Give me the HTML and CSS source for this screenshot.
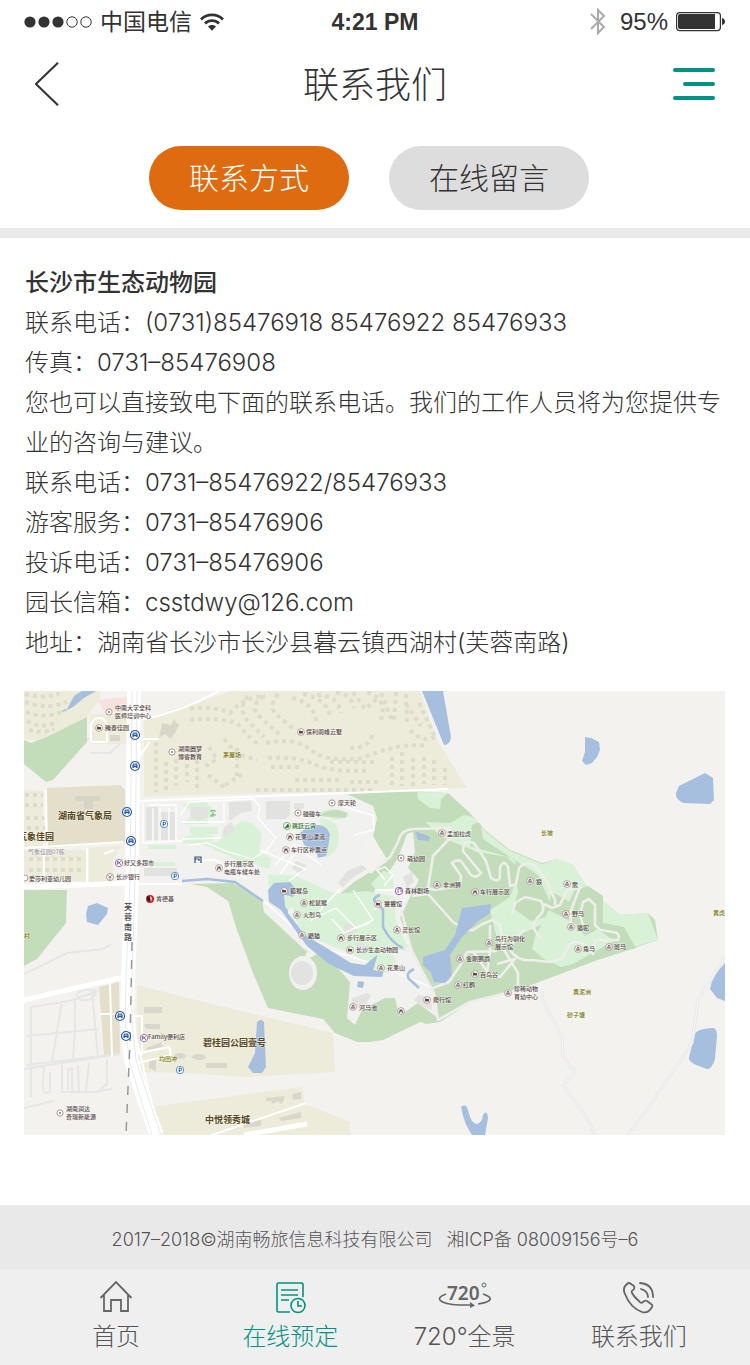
FILE: index.html
```html
<!DOCTYPE html>
<html lang="zh-CN">
<head>
<meta charset="utf-8">
<meta name="viewport" content="width=device-width, initial-scale=1">
<title>联系我们</title>
<link rel="stylesheet" href="styles.css">
</head>
<body>
<div class="status">
  <div class="status-left">
    <svg class="signal" viewBox="0 0 68 12" width="68" height="12" aria-hidden="true"><g fill="#333"><circle cx="6" cy="6" r="5.6"/><circle cx="20" cy="6" r="5.6"/><circle cx="34" cy="6" r="5.6"/></g><g fill="none" stroke="#333"><circle cx="48" cy="6" r="5.2"/><circle cx="62" cy="6" r="5.2"/></g></svg>
    <span class="carrier">中国电信</span>
    <svg viewBox="0 0 24 18" width="24" height="18" aria-hidden="true"><g fill="none" stroke="#333" stroke-width="2.8"><path d="M1 6.4C7 .3 17 .3 23 6.4"/><path d="M5 10.4c4-3.8 10-3.8 14 0"/></g><path d="M8 13.6c2.400-2 5.600-2 8 0l-4 4.200z" fill="#333"/></svg>
  </div>
  <span class="clock">4:21 PM</span>
  <div class="status-right">
    <svg class="bluetooth" viewBox="0 0 16 28" width="16" height="28" aria-hidden="true"><path d="M1 6l13 13-6 6V2l6 6L1 21" fill="none" stroke="#aaa" stroke-width="2"/></svg>
    <span class="percent">95%</span>
    <svg viewBox="0 0 50 20" width="50" height="20" aria-hidden="true"><rect x=".6" y=".6" width="43.800" height="18" rx="3" fill="none" stroke="#333" stroke-width="1.200"/><path d="M4 2h35v15H4q-2 0-2-2V4q0-2 2-2z" fill="#333"/><path d="M46 6q3 1 3 3.500T46 13z" fill="#333"/></svg>
  </div>
</div>

<header class="header">
  <button class="icon-button" type="button" aria-label="返回"><svg viewBox="0 0 24 44" width="24" height="44"><path d="M23 .7L1 22l22 21.300" fill="none" stroke="#333" stroke-width="2"/></svg></button>
  <h1 class="title">联系我们</h1>
  <button class="icon-button menu-button" type="button" aria-label="菜单"><svg viewBox="0 0 42 32" width="42" height="32"><path d="M2 2h38M12 16h28M2 30h38" stroke="#009383" stroke-width="4" stroke-linecap="round"/></svg></button>
</header>

<div class="tabs">
  <button class="tab tab-active" type="button">联系方式</button>
  <button class="tab" type="button">在线留言</button>
</div>

<main class="content">
  <div class="details">
    <h2 class="name">长沙市生态动物园</h2>
    <p>联系电话：(0731)85476918 85476922 85476933</p>
    <p>传真：0731–85476908</p>
    <p>您也可以直接致电下面的联系电话。我们的工作人员将为您提供专业的咨询与建议。</p>
    <p>联系电话：0731–85476922/85476933</p>
    <p>游客服务：0731–85476906</p>
    <p>投诉电话：0731–85476906</p>
    <p>园长信箱：csstdwy@126.com</p>
    <p>地址：湖南省长沙市长沙县暮云镇西湖村(芙蓉南路)</p>
  </div>

  <svg class="map" viewBox="24 691 701 444" role="img" aria-label="长沙市生态动物园地图">
    <defs>
      <g id="dot"><circle r="3.100" fill="#fff" stroke="#94807f" stroke-width=".8"/><circle r=".9" fill="#806463"/></g>
      <g id="pav"><circle r="3.400" fill="#fff" stroke="#94807f" stroke-width=".7"/><path d="M-2-.5L0-2.200 2-.5zM-1.600 0h3.200v1.800h-3.200z" fill="#684746"/><path d="M-.5 0v1.800M.6 0v1.800" stroke="#fff" stroke-width=".4"/></g>
      <g id="hall"><circle r="3.400" fill="#fff" stroke="#94807f" stroke-width=".7"/><path d="M-2 1.500v-2.500l1-.8 1 .8h2v2.500z" fill="#684746"/></g>
      <g id="car"><circle r="3.400" fill="#fff" stroke="#94807f" stroke-width=".7"/><path d="M-1.900 1.900l.5-3.400h2.800l.5 3.400H.8V.5H-.8v1.400z" fill="#684746"/></g>
      <g id="bus"><circle r="4.500" fill="#fff" stroke="#2659a4" stroke-width="1.100"/><path d="M-2.600 2.100V-.8l.8-1.600h3.600l.8 1.600v2.900h-1.400v-.8h-2.400v.8z" fill="#2659a4"/><path d="M-1.400-.9h2.800" stroke="#fff" stroke-width=".9"/></g>
      <g id="park"><circle r="3.700" fill="#fff" stroke="#3477bb" stroke-width=".8"/><path d="M-.8 2.200v-4h1.200q1.300 0 1.300 1.200T.4.600H-.8" fill="none" stroke="#2659a4" stroke-width="1"/></g>
      <g id="shop"><circle r="3.700" fill="#fff" stroke="#8758b1" stroke-width=".8"/><path d="M-1.700-1.800v3.600M-1.700-1.200h1.500L1.700 1.800M1.600-1.700L-.8.700" fill="none" stroke="#74449f" stroke-width=".9"/></g>
    </defs>
    <path fill="#f4f2ef" d="M24 691h701v444H24z"/>

    <!-- residential blocks -->
    <g fill="#edebd9">
      <path d="M24 691h76v8l-13 18-37 20-14 4-12-3zM90 714h38v30H90zM24 790l19 1v55l-19 1zM24 850h63v31H24zM89 848l33-3-9 15v23H89z"/>
      <path d="M144 719l45-15 44-13h187l17 49 30 48-87 3-190 4-46 2z"/>
      <path d="M137 985l67 17 129 31 2 39-92 5-53-4-53-1zM152 1107l50-7 100-13 3 17 45 18v13H164z"/>
    </g>
    <path fill="#f7e1df" d="M98 700l31-3v16l-26-3z"/>
    <path fill="#e3dfca" d="M47 788l73-3 5 5v52l-78 6zM99 987l20-5 1 71-16 2z"/>
    <path fill="#d8d4c5" d="M75 796h25v5H93v8H84v-8h-9z"/>
    <!-- houses -->
    <g fill="none" stroke="#dfdbcb" stroke-width="4" stroke-dasharray="4 4">
      <path d="M25 694q16 5 34 0M25 702q22 8 42 0M26 712q20 8 40-2M27 721q15 9 31 0M29 730q12 4 25-1M25 795h18M25 805h18M26 818h18M27 828h18M29 859h55M29 870h55"/>
      <path d="M190 709q20-4 40 4q15-17 35-17M190 720q25-3 47 3q16 20 24 22M248 696q-12 14 2 27l14 14M264 696q-16 10-4 21l20 18M278 694q-11 14 0 22l17 14M292 698q22 5 24 23M303 694q24 5 27 22M317 695q21 0 24 18M336 693q15 0 18 15M353 692l12 17 14-12M367 692q21 7 14 28M381 693l12 30M396 692l-2 29M406 694l1 30"/>
      <path d="M156 742v50M166 762v28M176 759v27M187 756v26M197 752v40M209 747l8 12-13 8M224 739l13 15 20 6M237 748v28M266 743q30-6 45 7t52 8q35-16 65-12M268 758q29-2 46 6t55 7M271 767h29M330 762h45M295 780h45M208 775l16 12M225 785l20-12M350 748q20 1 23-16M256 790h120M350 782h30M392 757v28M402 752v34M413 758v28M424 757v27M434 760v25M445 768v17M410 730q16 16 28 4M406 704l15 22M419 703l16 34"/>
    </g>
    <g fill="#d9d6cb"><path d="M144 1007h18v6h-18zM144 1024h16v5h-14zM146 1048l16-6v5l-14 3zM149 1060h7v11l-7-3z"/><ellipse cx="180" cy="1056" rx="6" ry="3"/><ellipse cx="199" cy="1057" rx="7" ry="3"/><path d="M206 1063h21v5h-21zM266 1098l18-2v4l-3 4-3-3-5 3-2-3h-5zM292 1094l9-2v7l-8 1zM279 1118l22-6v6l-20 3zM244 1123l17-4v7l-17 2zM162 723l9 2 3-6 5 7-8 13-6-5-6 4zM110 741h10v-6h-10z"/></g>

    <!-- roads of the western blocks -->
    <g fill="none" stroke="#e5e6e5" stroke-width="2">
      <path d="M31 1007l38-6 29-10M31 1007v90M27 1065l91-11M24 1069l96-15M27 1036l72-7M52 1062l10-60M75 1000v30l-2 30M92 991l6 66M78 1065l1 27M89 1063l-3 28M107 1059v25l-10 8M62 1065v27h32l18-3M44 1067q-2 24 0 25t6 0V1072M68 1090v-18q0-4 4-4v24M81 1000q-10-8 5-10t7 7q-2 4-12 3zM24 1108l30-7M24 974l43-21 36-4 8-5"/>
      <path d="M55 739h35M90 753h20l11-10"/>
    </g>
    <g fill="none" stroke="#fff" stroke-width="2">
      <path d="M91 741v-14q1-9 8-9t8 8v16H91M128 739h30M47 848l-1-58M87 848v37M24 848l99-6M44 882v-34M100 1014h22M110 983l2 74M131 1016h11v39M131 1055l38-8 2 8-38 9M150 742l-15 20M114 850l-10 4"/>
    </g>

    <!-- woods and park -->
    <g fill="#c3ddbb">
      <path d="M24 740l7 3 16-6 40-20v25l-34 38-7 2-22-18zM24 890h43l-1 33-29 36-13 7z"/>
      <path d="M190 884l43-1 30 17 2 12 42 37 130 65-54 26-13 2h-13l-22-9-12-14-55-11-15-35-16-43-9-29-21-14z"/>
      <path d="M347 793l55-2 46 2 22 20 15 17 25 20 32 13 15-4 16 6 14 22 33 28 28-2 7 7 3 20-55 18-40 15-45 17-48 13-30 19-14 2-66-25-26-100 20-17 34-21z"/>
    </g>
    <path fill="#d9f1d6" d="M417 792l31 1-7 6-1 10-10-1-12-9zM450 823l14-8 9 2 12 14 25 20 32 13 15-5 16 6 14 22 33 28 28-2 10 27-35 10-16-18-25-7-12-23-18-10-9 32-17 8-28 11-8-33 20-13 10-28-13-12-30-5-35-15-17-15z"/>
    <path fill="#c3ddbb" d="M472 825q7-4 9 0l2 14 30 20 13 8 12 8 14 32-6 10-15 4-18-13 5-15-3-34-45-13zM574 891l14-5 15 10v27l21 4 12 21-39 12-2-22-15-8-14-10-8 10z"/>
    <path fill="#d9f1d6" d="M549 910l26 14 10 12 13-7 16 12-20 11-21 12-12 3-17-8-12-10 3-12z"/>

    <!-- western grounds -->
    <path fill="#f1f1f0" d="M143 803L347 794 373 806 377 818 373 836 363 840 359 870 339 887 338 895 372 894 385 878 398 858 407 834 413 832 415 852 408 868 419 880 412 893 400 918 413 950 434 993 438 1018 418 1003 399 1016 395 998 385 998 362 1010 355 1025 347 1018 350 982 337 967 315 953 305 950 264 912 262 900 233 882 143 881z"/>
    <g fill="#d9f1d6">
      <path d="M190 802h16l9 10-10 9-15-3zM190 827h28v7h-28zM190 840l31 3v8l-18-6-13-1zM148 845h28v4h-28zM148 862h27v4h-27zM213 850l10-8 23 2 26 15-3 10zM219 850l-3-7 14-14 12-8 10 2 10 11-3 19-9 5-4 8zM182 838l16-5 16 3v5l-30 2zM182 824l8-6 18 2v4zM182 805l8-3v8z"/>
      <path d="M319 819q20-1 20 17t-14 21l-15-7 16-14zM319 813q10-6 22-3l10 6-17 4zM269 874l28 2 38 18 32-3 30 6-2 20 12 34-22-4-15 17-20-11-45-18-10-16-3-19-24-14zM371 920l23-4 14 31-19 4zM371 884l12-13 9 2 2 15-17 3z"/>
    </g>
    <path fill="#c3ddbb" d="M319 816q12-10 29-3l-3 5z"/>
    <g fill="#e2e2e0">
      <path d="M229 802l22-1 1 10-11 2-12 8zM266 801h24v14l-5 4h-19zM224 827l8-5 2 8-7 6h-5zM191 807h17v9l-10 5-7-4zM146 807h12v33h-12zM159 812h16v28h-16zM144 868h33v8h-33zM296 861l10 4-4 9-10-5zM338 884l9-13 15-6 5 4-16 10-8 8zM344 925l10-2 4 9-12 3zM352 998l16-5 3 3-6 9-14 3zM354 943l8-1 8 8-6 5zM418 995l13 2 1 13-14-6-4-4zM403 877l9-5 2 10-7 6zM294 803h10v6h-10z"/>
    </g>
    <g fill="none" stroke="#fff" stroke-width="1.300">
      <path d="M143 803v40l39-2M149 805h27v35M153 808v33M160 808v33M169 808v33M181 815l8-13 65-3 6 8-2 11 18 20-10 13-14 8-26-8-19-8-18 2M182 822h42v-20M182 839l39-1M195 860h20l31 19M275 865l20-20 26 20M260 850l45 19-16 12M296 852l-16 22M337 805l36 10 1 15-20 5M263 900l50 45 65 20 55 23M385 880l-8-10 8-3 8 8-9 11M375 890h37M341 888l-16 17-14 16M311 920l25-12 20 20 14-5M353 890l20 30-29 13-12-14"/>
    </g>
    <g fill="none" stroke="#eeeeeb" stroke-width="2.600" stroke-linejoin="round">
      <path d="M370 873l20-16 8-15q3-13 16-13l36-1v10l-17 18-5 32 6 2 26-4 1-10-9-13q4-4 9-2l10 14q6 4 10-2l-18-22q0-12 11-8l12 18 5 17q9 6 9-3v-8q4-8 8 0l2 19 6-2 3-16q6-7 15-3l12 15 9 20v5M373 910l25-13 14 56 22 40 4 27 32-18 48-12 20-5"/>
      <path d="M412 896l16-2 25 28 12 8h8l8-5 11-5 8 5 4 25 14 23v17M497 951l-30 1-6 12-12 18-16 6M473 951l15 22 12 4 15-18-18 5M490 925v26l-3 22"/>
      <path d="M512 915L515 903 525 897 541 901Q547 911 537 918L533 926Q536 934 541 938M544 904L552 908 560 905 567 890 580 887 570 913 571 923M524 930L514 940 510 950Q518 962 532 960L550 962 563 958 570 944Q576 939 585 945L593 954 595 940 618 940Q621 933 613 932L600 930 595 925 595 905 589 899 583 902 580 915 583 925"/>
    </g>
    <g fill="#f1f1f0"><ellipse cx="303" cy="973" rx="14" ry="17"/><path d="M303 960l5-10 17-7 18 24-23-15-8 5z"/></g>
    <ellipse cx="302" cy="973" rx="11" ry="12" fill="#e2e2e0"/>

    <!-- water -->
    <g fill="#a7bfdf">
      <path d="M61 711l6-2 7-13 8-5h14l-12 7-11 9-10 5zM422 691h21l8 46q-1 8-7 8zM585 737l6 1 8 4 1 8-3 7-5 6-6 2-4-4 3-9zM679 786l26-13 8 5 1 22-4 4-27-1q-8-4-7-10zM86 914l2-8 9-3 11 5-1 6-9 11-11-3zM725 963v38l-8-3-7-9q2-13 15-26zM695 1035q0-6 18-7 4 0 4 8l-2 23q-3 10-8 10l-11-4q-8-4-7-8zM257 1022q4-4 7 0l2 45-4 6h-9l-5-6 7-14zM461 1107q5-4 7 3 3 14 9 14 5-1 6-9 4-6 5 3l-3 17h-13q-8-11-11-28z"/>
      <path d="M300 833l5-4 12-4q10 0 13 9l-2 14-2 8-8 2-2-7-12-6zM268 890l6-7 16-1 7 9-10 13 1 9 17 22 28 17 18 11 14 2 12-10 8 13-3 9-28-1-25-12-22-18-14-19-12-17-12-8zM415 831l15 6-1 4-11-1zM358 981l6 1-1 6-6-1zM462 908l29-4-1 9-13 9-15 15-12 18 2 20-7 8-11-1-3-9-8-8v-8l22-7 10-15z"/>
    </g>
    <g fill="none" stroke="#a7bfdf" stroke-width="2.500"><path d="M182 881l25-2 28 3 28 19M380 895q-10 4-3 8l6 7v17q8 16 20 21M414 969q-9 4-5 10l10 9"/></g>
    <path fill="#d9f1d6" d="M284 895q12 0 10 10-8 8-9 1zM378 954q15-4 19 8l-11 11-13-3z"/>
    <path fill="none" stroke="#e4e6e8" stroke-width="3" d="M542 990v9l8 16 12 22 1 20 12 15-12 13 25 35 7 15M725 957l-27 43-6 43-45 67-19 25"/>
    <path fill="none" stroke="#f6f6f4" stroke-width="1.200" d="M542 990v9l8 16 12 22 1 20 12 15-12 13 25 35 7 15M725 957l-27 43-6 43-45 67-19 25"/>

    <!-- main roads -->
    <g fill="none" stroke="#fff">
      <path stroke-width="5" d="M24 887l106-4M24 1000l100-23"/>
      <path stroke-width="14" d="M134 691l-2 190-4 97-1 42 4 40 13 40 13 35"/>
      <path stroke-width="2" d="M139 720q40-7 80-29M138 801l210-8 100-4M137 884h45M134 1018l4 50M212 1135l94-32M152 1104l-18-75"/>
      <path stroke-width="5" d="M244 1135l63-11"/>
    </g>
    <g fill="none" stroke="#e7eaec"><path d="M132 691l-2 190-4 97-1 42 4 40 12 40 11 35M137 691l-2 190-3 97v42l4 40 13 40 12 35"/></g>
    <path fill="none" stroke="#999" stroke-width="1.500" stroke-dasharray="9 9" d="M132 942l-2 101-2 45-2 47"/>

    <!-- points of interest -->
    <use href="#bus" x="135" y="735"/><use href="#bus" x="135" y="766"/><use href="#bus" x="127" y="812"/><use href="#bus" x="131" y="841"/><use href="#bus" x="120" y="1016"/><use href="#bus" x="126" y="1036"/>
    <use href="#park" x="164" y="824"/><use href="#park" x="175" y="876"/><use href="#park" x="180" y="1070"/>
    <use href="#dot" x="109" y="712"/><use href="#dot" x="172" y="752"/><use href="#dot" x="332" y="803"/><use href="#dot" x="298" y="813"/><use href="#dot" x="401" y="858"/><use href="#dot" x="60" y="1113"/>
    <use href="#hall" x="99" y="728"/><use href="#hall" x="301" y="732"/><use href="#hall" x="284" y="891"/><use href="#hall" x="378" y="904"/><use href="#hall" x="350" y="950"/><use href="#hall" x="475" y="974"/><use href="#hall" x="427" y="1000"/>
    <use href="#car" x="286" y="850"/><use href="#car" x="219" y="868"/><use href="#car" x="341" y="938"/><use href="#car" x="475" y="892"/><use href="#car" x="290" y="837"/><use href="#car" x="401" y="1011"/>
    <use href="#pav" x="304" y="903"/><use href="#pav" x="297" y="915"/><use href="#pav" x="302" y="935"/><use href="#pav" x="442" y="833"/><use href="#pav" x="437" y="885"/><use href="#pav" x="530" y="881"/><use href="#pav" x="567" y="884"/><use href="#pav" x="566" y="914"/><use href="#pav" x="571" y="927"/><use href="#pav" x="578" y="949"/><use href="#pav" x="609" y="947"/><use href="#pav" x="397" y="930"/><use href="#pav" x="489" y="943"/><use href="#pav" x="460" y="959"/><use href="#pav" x="458" y="985"/><use href="#pav" x="508" y="993"/><use href="#pav" x="381" y="968"/><use href="#pav" x="353" y="1007"/>
    <use href="#shop" x="119" y="863"/><use href="#shop" x="144" y="1038"/>
    <g fill="none" stroke="#74449f"><circle cx="399" cy="891" r="3.700" fill="#fff" stroke-width=".8"/><path d="M398 893v-4l3-1v4" stroke-width=".8"/></g>
    <circle cx="110" cy="877" r="3.500" fill="#fff" stroke="#94807f" stroke-width=".8"/><path d="M108 875l2 2 2-2M110 877v3M108.500 877.500h3" fill="none" stroke="#806463" stroke-width=".7"/>
    <circle cx="287" cy="826" r="3.500" fill="#fff" stroke="#5b9d54" stroke-width=".8"/><path d="M285 828l3-4 1 3z" fill="#236d25" stroke="#236d25" stroke-width=".6"/>
    <circle cx="150" cy="899" r="4" fill="#d41e24"/><path d="M147 896l3 1v5l-3-2z" fill="#222"/><path d="M150 896l2 2-1 4z" fill="#fff"/>
    <path d="M195 863v-6h6v6M195 859h4v2" fill="none" stroke="#36506e" stroke-width="1.200"/>
    <path d="M211 812v-1.500h4v1.500M211 817v-2h5M213 812v5" fill="none" stroke="#71b676"/>
    <circle cx="25" cy="878" r="3" fill="#fff" stroke="#94807f" stroke-width=".8"/>

    <g class="map-poi">
      <text x="115" y="710">中南大学全科</text><text x="115" y="718">医师培训中心</text><text x="105" y="730">腾泰佳园</text><text x="178" y="751">湖南圆梦</text><text x="178" y="759">博睿教育</text><text x="306" y="734">保利阆峰云墅</text>
      <text x="338" y="805">摩天轮</text><text x="303" y="816">碰碰车</text><text x="295" y="839">花果山漂流</text><text x="291" y="852">车行区补票点</text><text x="224" y="866">步行展示区</text><text x="224" y="874">电瓶车候车处</text>
      <text x="124" y="865">好又多超市</text><text x="116" y="879">长沙银行</text><text x="29" y="881">爱莎利亚幼儿园</text><text x="156" y="901">肯德基</text>
      <text x="290" y="893">狐猴岛</text><text x="309" y="905">松鼠猴</text><text x="303" y="917">火烈鸟</text><text x="308" y="938">鼯猫</text><text x="347" y="940">步行展示区</text><text x="356" y="952">长沙生态动物园</text><text x="359" y="1010">河马池</text>
      <text x="447" y="836">孟加拉虎</text><text x="407" y="861">萌幼园</text><text x="443" y="887">非洲狮</text><text x="405" y="893">森林剧场</text><text x="384" y="906">獾獾馆</text><text x="480" y="894">车行展示区</text><text x="536" y="884">狼</text><text x="572" y="887">熊</text><text x="572" y="916">野马</text><text x="577" y="930">骆驼</text><text x="583" y="951">角马</text><text x="614" y="949">斑马</text>
      <text x="402" y="932">灵长馆</text><text x="495" y="941">鸟行为驯化</text><text x="495" y="949">展示馆</text><text x="466" y="961">金刚鹦鹉</text><text x="480" y="977">百鸟谷</text><text x="463" y="987">红鹳</text><text x="514" y="991">珍稀动物</text><text x="514" y="999">育幼中心</text><text x="387" y="970">花果山</text><text x="433" y="1002">爬行馆</text>
      <text x="148" y="1039">Family便利店</text><text x="66" y="1111">湖南润达</text><text x="66" y="1119">奇瑞新能源</text>
    </g>
    <g class="map-poi map-green"><text x="292" y="828">跳跃云霄</text></g>
    <g class="map-poi map-gray"><text x="28" y="854">气象佳园07栋</text></g>
    <g class="map-poi map-village"><text x="223" y="757">茅屋场</text><text x="541" y="835">长坡</text><text x="713" y="915">黄虎</text><text x="573" y="994">黄泥洲</text><text x="567" y="1017">砂子塘</text><text x="159" y="1061">均田冲</text><text x="18" y="938">湖村</text></g>
    <g class="map-estate"><text x="58" y="819">湖南省气象局</text><text x="18" y="840">气象佳园</text><text x="203" y="1046">碧桂园公园壹号</text><text x="205" y="1123">中悦领秀城</text></g>
    <g class="map-road"><text x="124" y="910">芙</text><text x="124" y="920">蓉</text><text x="124" y="930">南</text><text x="124" y="940">路</text></g>
  </svg>
</main>

<footer class="copyright">2017–2018©湖南畅旅信息科技有限公司<span class="record">湘ICP备 08009156号–6</span></footer>

<nav class="nav">
  <a class="nav-item" href="#home">
    <svg viewBox="0 0 34 34" width="34" height="34" aria-hidden="true"><path d="M1.500 18L17 2l15.500 16M5 15v16h7V20h10v11h7V15" fill="none" stroke="#666" stroke-width="1.800"/></svg>
    <span>首页</span></a>
  <a class="nav-item nav-active" href="#booking">
    <svg viewBox="0 0 34 34" width="34" height="34" aria-hidden="true"><g fill="none" stroke="#009383" stroke-width="1.600"><path d="M17 32H5.500Q4 32 4 30.500v-26Q4 3 5.500 3h23Q30 3 30 4.500V17M8 10h17M8 15h17M8 20h8"/><circle cx="25" cy="25.500" r="7"/><path d="M25 21v5h4"/></g></svg>
    <span>在线预定</span></a>
  <a class="nav-item" href="#panorama">
    <svg viewBox="0 0 54 34" width="54" height="34" aria-hidden="true"><text class="pano-number" x="9" y="20">720</text><g fill="none" stroke="#666" stroke-width="1.600"><circle cx="46" cy="5" r="2" stroke-width="1"/><path d="M8 14C-4 18 1 24 21 25h14M45 14c12 4 8 8-5 10"/></g><path d="M32 22l5 3.500-5 2.500z" fill="#666"/></svg>
    <span>720°全景</span></a>
  <a class="nav-item" href="#contact">
    <svg viewBox="0 0 34 34" width="34" height="34" aria-hidden="true"><g fill="none" stroke="#666" stroke-width="1.800" stroke-linejoin="round" stroke-linecap="round"><path d="M5 4Q0 8 3 14c3 8 9 15 17 18q6 2 10-5 1-2-1-3l-4-3q-2-1-4 1t-4-1q-5-4-7-8-1-2 1-3t1-4L9 4Q7 2 5 4z"/><path d="M19 9q7 2 7 8M18 3q13 1 13 14"/></g></svg>
    <span>联系我们</span></a>
</nav>
</body>
</html>
```
FILE: styles.css
```css
* { box-sizing: border-box; }

body {
  margin: 0;
  background: #fff;
  color: #333;
  font-family: Inter, "Noto Sans CJK SC", sans-serif;
  font-weight: 300;
}

h1, h2, p { margin: 0; }

button {
  border: 0;
  padding: 0;
  background: none;
  color: inherit;
  font: inherit;
}

svg { display: block; }

.status {
  display: grid;
  grid-template-columns: 1fr auto 1fr;
  align-items: center;
  height: 44px;
  padding: 0 24px;
}

.status-left, .status-right {
  display: flex;
  align-items: center;
  gap: 8px;
}

.status-right { justify-content: flex-end; }

.bluetooth { margin-right: 6px; }

.carrier {
  font-size: 23px;
  font-weight: 400;
  line-height: 44px;
}

.clock {
  font-family: "Liberation Sans", sans-serif;
  font-size: 23px;
  font-weight: 700;
}

.percent {
  font-family: "Liberation Sans", sans-serif;
  font-size: 24px;
  font-weight: 400;
}

.header {
  display: grid;
  grid-template-columns: 1fr auto 1fr;
  align-items: center;
  height: 80px;
  padding: 0 35px;
}

.icon-button { justify-self: start; }
.menu-button { justify-self: end; }

.title {
  padding-top: 2px;
  font-size: 36px;
  font-weight: 300;
  line-height: 78px;
}

.tabs {
  display: flex;
  justify-content: center;
  gap: 40px;
  padding: 22px 12px 18px 0;
  border-bottom: 10px solid #e9e9e9;
}

.tab {
  width: 200px;
  height: 64px;
  border-radius: 32px;
  background: #ddd;
  font-size: 30px;
  line-height: 64px;
}

.tab-active {
  background: #de6b10;
  color: #fff;
}

.content {
  padding: 25px 25px 70px 24px;
  font-size: 24px;
  line-height: 40px;
}

.details { padding-left: 1px; }

.name {
  font-size: 24px;
  font-weight: 500;
}

.map {
  width: 100%;
  margin-top: 28px;
  font-family: "Noto Sans CJK SC", sans-serif;
}

.map text {
  paint-order: stroke;
  stroke: #fff;
  stroke-width: 1px;
  stroke-opacity: 0.6;
}

.map-poi {
  fill: #574848;
  font-size: 6px;
  font-weight: 500;
}

.map-green { fill: #317a31; }
.map-gray { fill: #a0a0a8; }
.map-village { fill: #777300; }

.map-estate {
  fill: #584720;
  font-size: 9px;
  font-weight: 700;
}

.map-road {
  fill: #444;
  font-size: 8px;
  font-weight: 500;
}

.copyright {
  height: 64px;
  padding: 6px 12px 0;
  background: #e9e9e9;
  color: #555;
  font-size: 18px;
  line-height: 58px;
  text-align: center;
}

.copyright .record { margin-left: 14px; }

.nav {
  display: grid;
  grid-template-columns: repeat(4, 1fr);
  height: 96px;
  padding: 11px 24px 0 29px;
  background: #efefef;
}

.nav-item {
  display: flex;
  flex-direction: column;
  align-items: center;
  gap: 1px;
  color: #555;
  font-size: 24px;
  line-height: 44px;
  text-decoration: none;
}

.nav-active { color: #009383; }

.pano-number {
  fill: #666;
  font-family: "Noto Sans", sans-serif;
  font-size: 19px;
  font-weight: 600;
}
```
